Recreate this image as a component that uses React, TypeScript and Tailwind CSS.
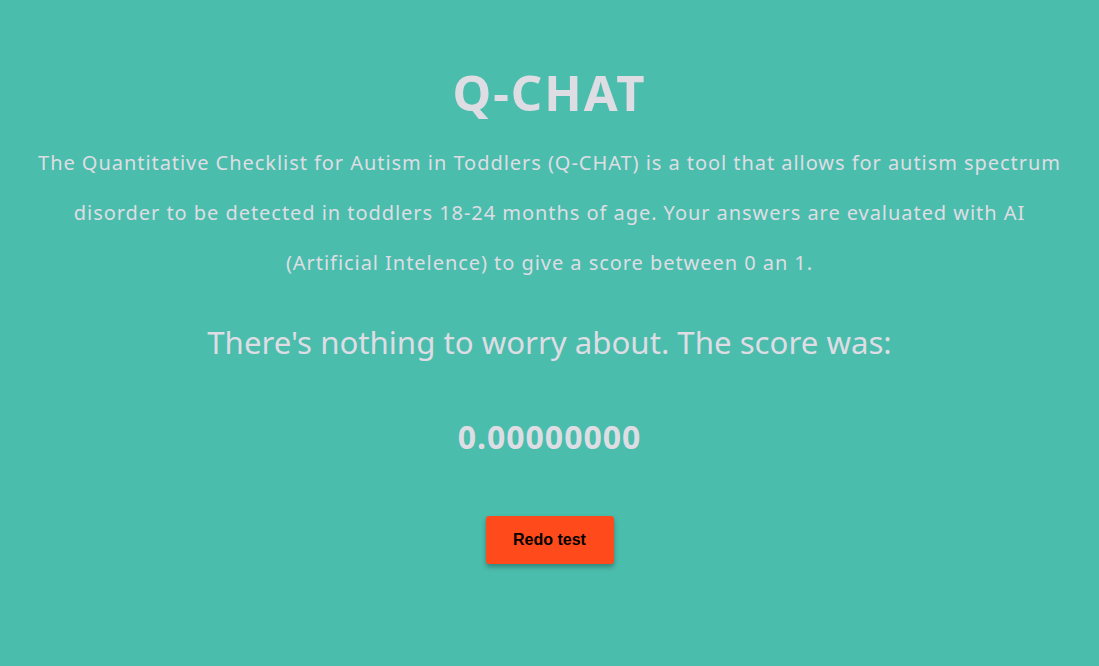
export default function App() {
  return (
    <div
      className="min-h-[666px] w-full bg-[#4bbdac] text-[#dfdde4] flex flex-col items-center text-center px-4 pt-[64px]"
      style={{ fontFamily: '"Segoe UI", "Noto Sans", sans-serif' }}
    >
      <h1 className="text-[49px] leading-[56px] font-bold tracking-[2px]">Q-CHAT</h1>
      <p className="mt-[18px] text-[20px] leading-[50px] tracking-[0.95px] max-w-[1035px]">
        The Quantitative Checklist for Autism in Toddlers (Q-CHAT) is a tool that allows for autism
        spectrum disorder to be detected in toddlers 18-24 months of age. Your answers are evaluated
        with AI (Artificial Intelence) to give a score between 0 an 1.
      </p>
      <h2 className="mt-[34px] text-[31.2px] leading-[40px]">
        There's nothing to worry about. The score was:
      </h2>
      <h2 className="mt-[55px] text-[32px] leading-[40px] font-bold tracking-[1px]">0.00000000</h2>
      <button
        className="mt-[59px] w-[128px] h-[48px] rounded-[3px] bg-[#ff4a1c] text-black text-[16px] font-bold shadow-[0_3px_5px_rgba(0,0,0,0.3)]"
        style={{ fontFamily: '"Liberation Sans", Arial, sans-serif' }}
      >
        Redo test
      </button>
    </div>
  );
}
